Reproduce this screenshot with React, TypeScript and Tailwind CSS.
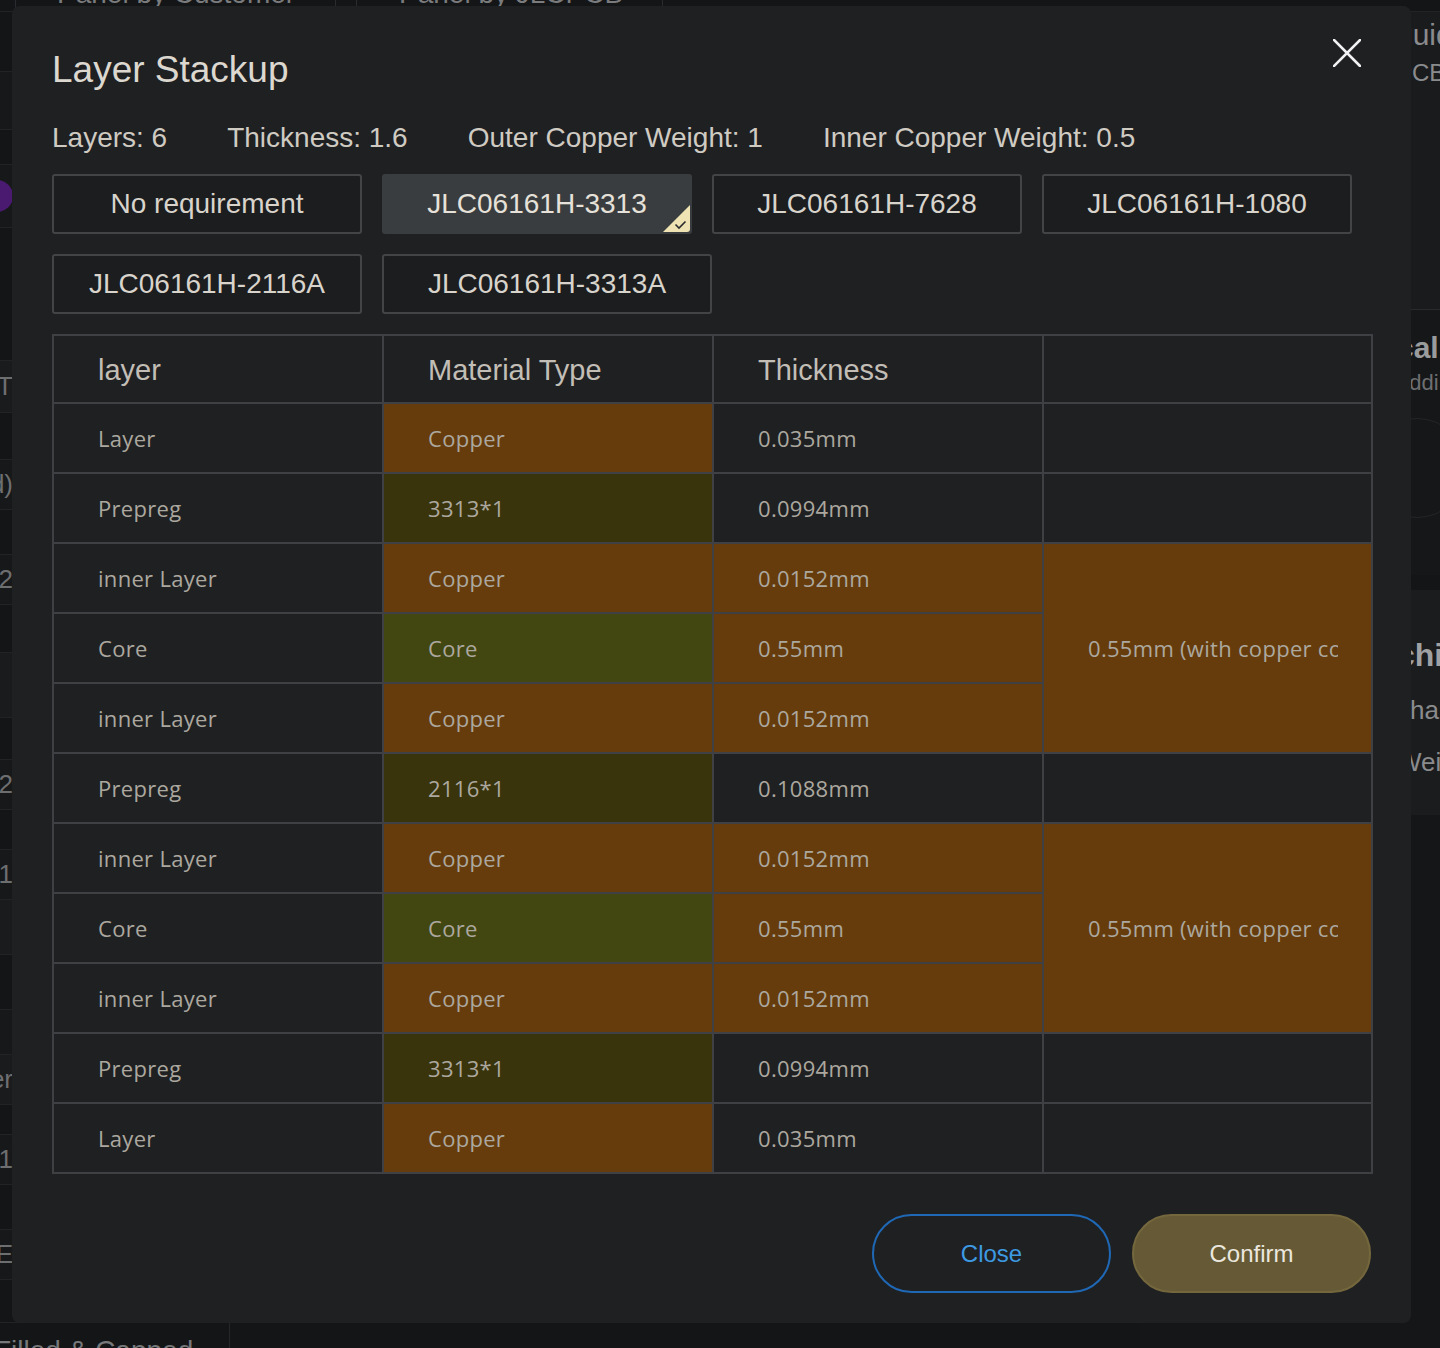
import React from "react";

type Mat = "copper" | "prepreg" | "core";

const matBg: Record<Mat, string> = {
  copper: "bg-[#663c0c]",
  prepreg: "bg-[#3a340c]",
  core: "bg-[#424712]",
};

type Row = {
  layer: string;
  mat: string;
  type: Mat;
  th: string;
  thCopper?: boolean;
  merge?: "start" | "skip" | "none";
};

const rows: Row[] = [
  { layer: "Layer", mat: "Copper", type: "copper", th: "0.035mm", merge: "none" },
  { layer: "Prepreg", mat: "3313*1", type: "prepreg", th: "0.0994mm", merge: "none" },
  { layer: "inner Layer", mat: "Copper", type: "copper", th: "0.0152mm", thCopper: true, merge: "start" },
  { layer: "Core", mat: "Core", type: "core", th: "0.55mm", thCopper: true, merge: "skip" },
  { layer: "inner Layer", mat: "Copper", type: "copper", th: "0.0152mm", thCopper: true, merge: "skip" },
  { layer: "Prepreg", mat: "2116*1", type: "prepreg", th: "0.1088mm", merge: "none" },
  { layer: "inner Layer", mat: "Copper", type: "copper", th: "0.0152mm", thCopper: true, merge: "start" },
  { layer: "Core", mat: "Core", type: "core", th: "0.55mm", thCopper: true, merge: "skip" },
  { layer: "inner Layer", mat: "Copper", type: "copper", th: "0.0152mm", thCopper: true, merge: "skip" },
  { layer: "Prepreg", mat: "3313*1", type: "prepreg", th: "0.0994mm", merge: "none" },
  { layer: "Layer", mat: "Copper", type: "copper", th: "0.035mm", merge: "none" },
];

const options = [
  "No requirement",
  "JLC06161H-3313",
  "JLC06161H-7628",
  "JLC06161H-1080",
  "JLC06161H-2116A",
  "JLC06161H-3313A",
];

const SANS = "font-['Liberation_Sans',Arial,sans-serif]";
const BODY = "font-['Open_Sans','Noto_Sans',sans-serif]";

type StripItem = { h: string; bg: string; text?: string; pill?: boolean };

const leftItems: StripItem[] = [
  { h: "h-[60px]", bg: "bg-[#141517]" },
  { h: "h-[58px]", bg: "bg-[#17181a]" },
  { h: "h-[35px]", bg: "bg-[#141517]" },
  { h: "h-[63px]", bg: "bg-[#17181a]", pill: true },
  { h: "h-[133px]", bg: "bg-[#141517]" },
  { h: "h-[52px]", bg: "bg-[#1a1b1d]", text: "T" },
  { h: "h-[47px]", bg: "bg-[#141517]" },
  { h: "h-[50px]", bg: "bg-[#17181a]", text: "d)" },
  { h: "h-[45px]", bg: "bg-[#141517]" },
  { h: "h-[50px]", bg: "bg-[#17181a]", text: "2" },
  { h: "h-[48px]", bg: "bg-[#141517]" },
  { h: "h-[65px]", bg: "bg-[#1a1b1d]" },
  { h: "h-[42px]", bg: "bg-[#141517]" },
  { h: "h-[50px]", bg: "bg-[#17181a]", text: "2" },
  { h: "h-[40px]", bg: "bg-[#141517]" },
  { h: "h-[50px]", bg: "bg-[#17181a]", text: "1" },
  { h: "h-[55px]", bg: "bg-[#1a1b1d]" },
  { h: "h-[55px]", bg: "bg-[#141517]" },
  { h: "h-[45px]", bg: "bg-[#17181a]" },
  { h: "h-[50px]", bg: "bg-[#1a1b1d]", text: "er" },
  { h: "h-[30px]", bg: "bg-[#141517]" },
  { h: "h-[50px]", bg: "bg-[#17181a]", text: "1" },
  { h: "h-[45px]", bg: "bg-[#141517]" },
  { h: "h-[50px]", bg: "bg-[#17181a]", text: "E" },
  { h: "h-[43px]", bg: "bg-[#141517]" },
];

function LeftStrip() {
  return (
    <div className="flex w-[230px] flex-col border-r border-[#26272a]">
      {leftItems.map((it, i) => (
        <div
          key={i}
          className={`${it.h} ${it.bg} flex shrink-0 items-center justify-end border-b border-[#222326] pr-[216px] text-[26px] text-[#6d6e70] ${SANS}`}
        >
          {it.pill && <div className="h-[32px] w-[40px] shrink-0 rounded-full bg-[#4a1a70]" />}
          {it.text && <span className="whitespace-nowrap">{it.text}</span>}
        </div>
      ))}
      <div className={`-ml-[6px] whitespace-nowrap pt-[12px] text-[28px] leading-[32px] text-[#77787a] ${SANS}`}>
        Filled &amp; Capped
      </div>
    </div>
  );
}

function RightStrip() {
  return (
    <div className={`flex w-[300px] flex-col ${SANS}`}>
      <div className="flex h-[298px] shrink-0 flex-col border-b border-[#2a2b2e] bg-[#1a1b1d] pl-[256px] pt-[3px] text-[#8a8b8d]">
        <span className="whitespace-nowrap text-[30px] leading-[40px]">guide</span>
        <span className="whitespace-nowrap text-[24px] leading-[36px]">PCB</span>
      </div>
      <div className="flex h-[265px] shrink-0 flex-col bg-[#161719] pl-[257px] pt-[18px]">
        <span className="whitespace-nowrap text-[30px] font-bold leading-[40px] text-[#9a9b9d]">cal</span>
        <span className="whitespace-nowrap text-[22px] leading-[30px] text-[#6e6f71]">addi</span>
        <div className="ml-[-30px] mt-[20px] h-[100px] w-[100px] rounded-full border border-[#242527]" />
      </div>
      <div className="h-[15px] shrink-0 bg-[#141517]" />
      <div className="flex h-[225px] shrink-0 flex-col bg-[#1b1c1e] pl-[257px] pt-[43px]">
        <span className="whitespace-nowrap text-[32px] font-bold leading-[44px] text-[#a0a1a3]">chi</span>
        <span className="mt-[13px] whitespace-nowrap text-[26px] leading-[40px] text-[#8a8b8d]">cha</span>
        <span className="mt-[12px] whitespace-nowrap text-[26px] leading-[40px] text-[#8a8b8d]">Wei</span>
      </div>
      <div className="flex-1 bg-[#151618]" />
    </div>
  );
}

function Background() {
  return (
    <div className="flex h-[1348px] w-[1440px] flex-col bg-[#141517]">
      <div className={`flex h-[12px] shrink-0 items-end border-b border-[#222326] ${SANS}`}>
        <div className="h-[40px] w-[16px] shrink-0 border-r border-[#2a2b2e]" />
        <div className="flex h-[40px] w-[320px] shrink-0 items-end border-r border-[#2a2b2e] pl-[41px] text-[28px] leading-[34px] text-[#7a7b7d]">
          <span className="whitespace-nowrap">Panel by Customer</span>
        </div>
        <div className="h-[40px] w-[21px] shrink-0 border-r border-[#2a2b2e]" />
        <div className="flex h-[40px] w-[306px] shrink-0 items-end border-r border-[#2a2b2e] pl-[42px] text-[28px] leading-[34px] text-[#7a7b7d]">
          <span className="whitespace-nowrap">Panel by JLCPCB</span>
        </div>
      </div>
      <div className="flex flex-1">
        <LeftStrip />
        <div className="flex-1" />
        <RightStrip />
      </div>
    </div>
  );
}

function SelectedBadge() {
  return (
    <svg className="absolute bottom-0 right-0" width="27" height="27" viewBox="0 0 27 27">
      <path d="M27 0 L27 24 Q27 27 24 27 L0 27 Z" fill="#efe3b3" />
      <path d="M12.5 19.5 L16 23 L22.5 16.5" fill="none" stroke="#2b2c2e" strokeWidth="1.6" />
    </svg>
  );
}

export default function App() {
  return (
    <div className="relative h-[1348px] w-[1440px] overflow-hidden bg-[#141517]">
      <Background />
      <div className="absolute left-[12px] top-[6px] flex h-[1317px] w-[1399px] flex-col rounded-lg bg-[#1f2022] px-[40px] pt-[43px]">
        <button className="absolute right-[50px] top-[33px]" aria-label="close">
          <svg width="28" height="28" viewBox="0 0 28 28">
            <path d="M1 1 L27 27 M27 1 L1 27" stroke="#f2f2f2" strokeWidth="2.6" strokeLinecap="square" />
          </svg>
        </button>
        <h2 className={`text-[37px] leading-[41px] text-[#dcd8d0] ${SANS}`}>Layer Stackup</h2>
        <div className={`mt-[32px] flex gap-[60px] text-[28px] leading-[32px] text-[#cfcbc3] ${SANS}`}>
          <span>Layers: 6</span>
          <span>Thickness: 1.6</span>
          <span>Outer Copper Weight: 1</span>
          <span>Inner Copper Weight: 0.5</span>
        </div>
        <div className="mt-[20px] flex w-[1300px] flex-wrap gap-[20px]">
          {options.map((o, i) => {
            const sel = i === 1;
            const wide = i === 5;
            return (
              <div
                key={o}
                className={`relative flex h-[60px] items-center justify-center rounded-[3px] border-2 text-[28px] ${SANS} ${
                  wide ? "w-[330px]" : "w-[310px]"
                } ${
                  sel
                    ? "border-[#3a3d40] bg-[#3a3d40] text-[#e6e2da]"
                    : "border-[#434446] bg-[#1c1d1f] text-[#d8d4cc]"
                }`}
              >
                {o}
                {sel && <SelectedBadge />}
              </div>
            );
          })}
        </div>
        <table className="mt-[20px] w-[1319px] table-fixed border-collapse border-2 border-[#3e4043]">
          <colgroup>
            <col className="w-[330px]" />
            <col className="w-[330px]" />
            <col className="w-[330px]" />
            <col className="w-[329px]" />
          </colgroup>
          <thead>
            <tr className={`h-[68px] text-left text-[29px] font-normal text-[#c2beb6] ${SANS}`}>
              <th className="border-2 border-[#3e4043] pl-[44px] pt-[3px] font-normal">layer</th>
              <th className="border-2 border-[#3e4043] pl-[44px] pt-[3px] font-normal">Material Type</th>
              <th className="border-2 border-[#3e4043] pl-[44px] pt-[3px] font-normal">Thickness</th>
              <th className="border-2 border-[#3e4043]" />
            </tr>
          </thead>
          <tbody className={`text-[22px] tracking-[0.3px] text-[#aca89f] ${BODY}`}>
            {rows.map((r, i) => (
              <tr key={i} className="h-[70px]">
                <td className="border-2 border-[#3e4043] pl-[44px]">{r.layer}</td>
                <td className={`border-2 border-[#3e4043] pl-[44px] ${matBg[r.type]}`}>{r.mat}</td>
                <td className={`border-2 border-[#3e4043] pl-[44px] ${r.thCopper ? "bg-[#663c0c]" : ""}`}>{r.th}</td>
                {r.merge === "none" && <td className="border-2 border-[#3e4043]" />}
                {r.merge === "start" && (
                  <td rowSpan={3} className="border-2 border-[#3e4043] bg-[#663c0c] pl-[44px]">
                    <div className="w-[250px] overflow-hidden whitespace-nowrap">0.55mm (with copper core)</div>
                  </td>
                )}
              </tr>
            ))}
          </tbody>
        </table>
        <div className={`mt-[40px] flex justify-end gap-[21px] ${SANS}`}>
          <button className="flex h-[79px] w-[239px] items-center justify-center rounded-full border-2 border-[#1f68b5] text-[24px] text-[#3d9ae2]">
            Close
          </button>
          <button className="flex h-[79px] w-[239px] items-center justify-center rounded-full border-2 border-[#74673d] bg-[#655a35] text-[24px] text-[#ebe7df]">
            Confirm
          </button>
        </div>
      </div>
    </div>
  );
}
